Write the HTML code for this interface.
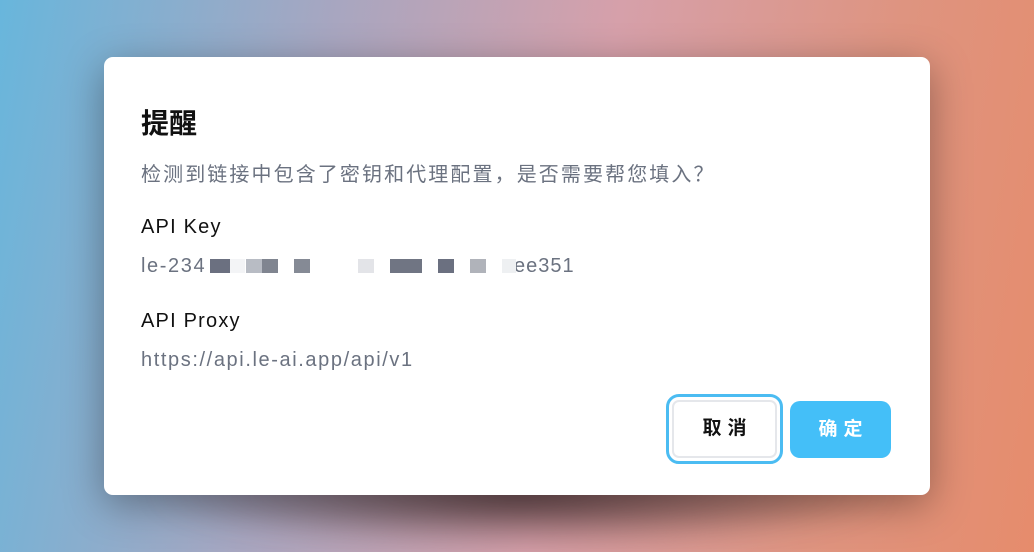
<!DOCTYPE html>
<html><head><meta charset="utf-8"><style>
html,body{margin:0;width:1034px;height:552px;overflow:hidden}
body{background:linear-gradient(100deg,#68b6dc 0%,#a8a6c0 30%,#d6a0aa 55%,#de9480 80%,#e68c6c 100%);position:relative;font-family:"Liberation Sans","Noto Sans CJK SC",sans-serif}
.shadow{position:absolute;left:140px;top:440px;width:760px;height:110px;background:radial-gradient(ellipse at center,rgba(60,40,40,.75),rgba(60,40,40,0) 70%);filter:blur(12px)}
.dlg{position:absolute;left:104px;top:57px;width:826px;height:438px;background:#fff;border-radius:9px;box-shadow:0 10px 40px rgba(0,0,0,.35)}
.t{position:absolute;left:37px;top:45px;font-size:28px;font-weight:bold;color:#111}
.d{position:absolute;left:37px;top:101px;font-size:20px;color:#6b7280;letter-spacing:2.1px}
.l{position:absolute;left:37px;font-size:20px;color:#111;letter-spacing:1.2px}
.v{position:absolute;font-size:20px;color:#6b7280;letter-spacing:1.6px}
.b{position:absolute;height:14px;top:202px}
.btn{position:absolute;border-radius:10px;font-size:19px;font-weight:bold;text-align:center;letter-spacing:6px;text-indent:6px}
</style></head><body>
<div class="shadow"></div>
<div class="dlg">
<div class="t">提醒</div>
<div class="d">检测到链接中包含了密钥和代理配置，是否需要帮您填入？</div>
<div class="l" style="top:159px">API Key</div>
<div class="v" style="top:198px;left:37px">le-234</div>
<div class="v" style="top:198px;left:410px;letter-spacing:1px">ee351</div>
<div class="b" style="left:106px;width:20px;background:#6b7080"></div>
<div class="b" style="left:126px;width:15px;background:#f3f4f6"></div>
<div class="b" style="left:142px;width:16px;background:#b8bcc4"></div>
<div class="b" style="left:158px;width:16px;background:#808590"></div>
<div class="b" style="left:190px;width:16px;background:#858a95"></div>
<div class="b" style="left:254px;width:16px;background:#e3e4e8"></div>
<div class="b" style="left:286px;width:32px;background:#707583"></div>
<div class="b" style="left:334px;width:16px;background:#6b7080"></div>
<div class="b" style="left:366px;width:16px;background:#b0b3ba"></div>
<div class="b" style="left:398px;width:14px;background:#eef0f2"></div>
<div class="l" style="top:253px">API Proxy</div>
<div class="v" style="top:292px;left:37px">https://api.le-ai.app/api/v1</div>
<div class="btn" style="left:562px;top:337px;width:117px;height:70px;line-height:64px;border:3px solid #4bbcf2;border-radius:13px;box-sizing:border-box;background:#fff;color:#111;box-shadow:inset 0 0 0 3px #fff,inset 0 0 0 5px #e5e7eb">取消</div>
<div class="btn" style="left:686px;top:344px;width:101px;height:57px;line-height:57px;background:#44bff8;color:#fff">确定</div>
</div>
</body></html>
